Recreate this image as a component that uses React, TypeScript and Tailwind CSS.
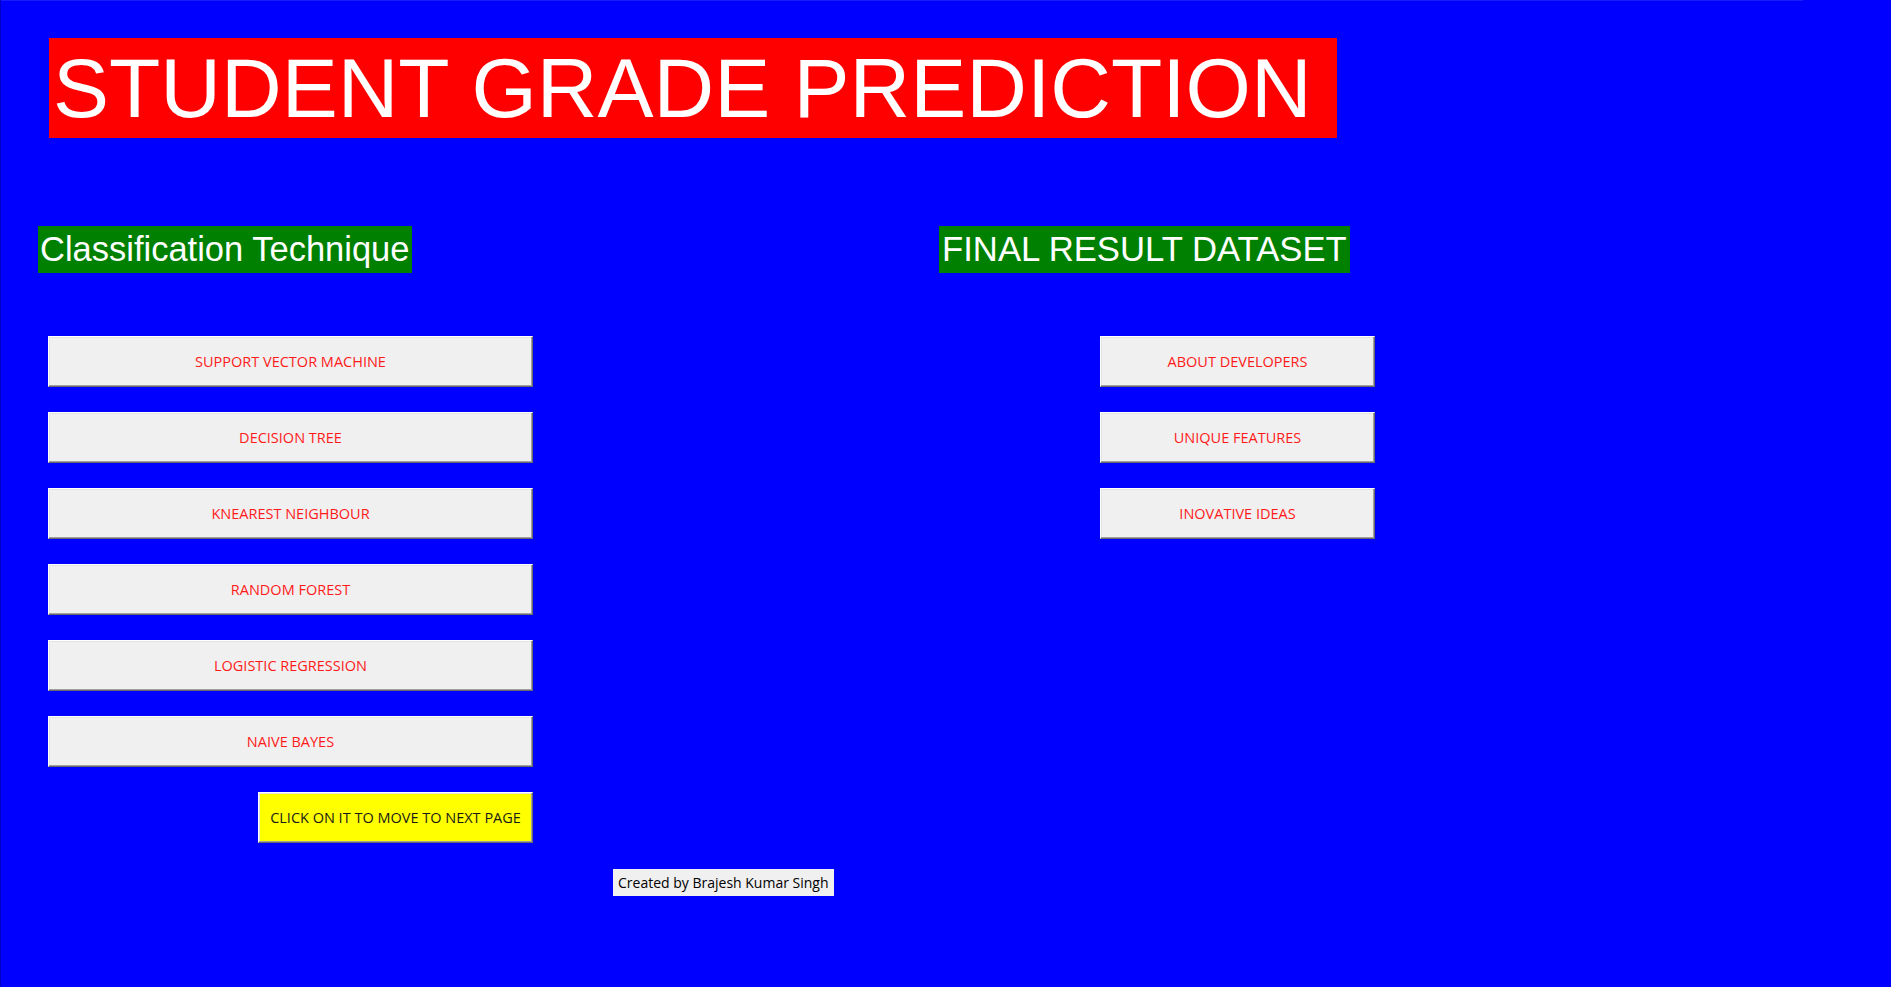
import React from "react";

const leftButtons = [
  "SUPPORT VECTOR MACHINE",
  "DECISION TREE",
  "KNEAREST NEIGHBOUR",
  "RANDOM FOREST",
  "LOGISTIC REGRESSION",
  "NAIVE BAYES",
];

const rightButtons = ["ABOUT DEVELOPERS", "UNIQUE FEATURES", "INOVATIVE IDEAS"];

function TkButton({
  label,
  className,
  textClass,
}: {
  label: string;
  className: string;
  textClass: string;
}) {
  return (
    <button
      type="button"
      className={`flex h-[51px] items-center justify-center border-[1px] border-t-white border-l-white border-r-[#696969] border-b-[#696969] shadow-[inset_-1px_-1px_0_#a0a0a0,inset_1px_1px_0_#e3e3e3] text-[14.5px] ${className} ${textClass}`}
      style={{ fontFamily: '"Open Sans", "Noto Sans", sans-serif' }}
    >
      {label}
    </button>
  );
}

export default function App() {
  return (
    <div className="relative h-[987px] w-[1891px] overflow-hidden bg-[#0000ff] border-l border-l-[#0000c8]">
      <div className="h-px w-[1802px] bg-[#1a1aff]" />
      <div className="ml-[48px] mt-[37px] flex h-[100px] w-[1288px] items-center bg-[#ff0000] pl-[4px]">
        <span
          className="text-[84px] leading-[100px] text-white"
          style={{ fontFamily: '"Liberation Sans", Arial, sans-serif' }}
        >
          STUDENT GRADE PREDICTION
        </span>
      </div>

      <div
        className="mt-[88px] flex items-start"
        style={{ fontFamily: '"Liberation Sans", Arial, sans-serif' }}
      >
        <div className="w-[938px] pl-[37px]">
          <div className="inline-block h-[47px] bg-[#008000] px-[2px] text-[34.5px] leading-[47px] text-white">
            Classification Technique
          </div>
        </div>
        <div className="inline-block h-[47px] bg-[#008000] px-[3px] text-[34.7px] leading-[47px] text-white">
          FINAL RESULT DATASET
        </div>
      </div>

      <div className="mt-[63px] flex items-start">
        <div className="ml-[47px] flex w-[485px] flex-col items-end gap-[25px]">
          {leftButtons.map((b) => (
            <TkButton
              key={b}
              label={b}
              className="w-[485px] bg-[#f0f0f0]"
              textClass="text-[#ff1a1a]"
            />
          ))}
          <TkButton
            label="CLICK ON IT TO MOVE TO NEXT PAGE"
            className="w-[275px] bg-[#ffff00]"
            textClass="text-[#1a1a1a]"
          />
        </div>
        <div className="ml-[567px] flex w-[275px] flex-col gap-[25px]">
          {rightButtons.map((b) => (
            <TkButton
              key={b}
              label={b}
              className="w-[275px] bg-[#f0f0f0]"
              textClass="text-[#ff1a1a]"
            />
          ))}
        </div>
      </div>

      <div className="ml-[612px] mt-[26px] flex">
        <div
          className="flex h-[27px] items-center bg-[#f0f0f0] px-[5px] text-[14px] text-black"
          style={{ fontFamily: '"Open Sans", "Noto Sans", sans-serif' }}
        >
          Created by Brajesh Kumar Singh
        </div>
      </div>
    </div>
  );
}
